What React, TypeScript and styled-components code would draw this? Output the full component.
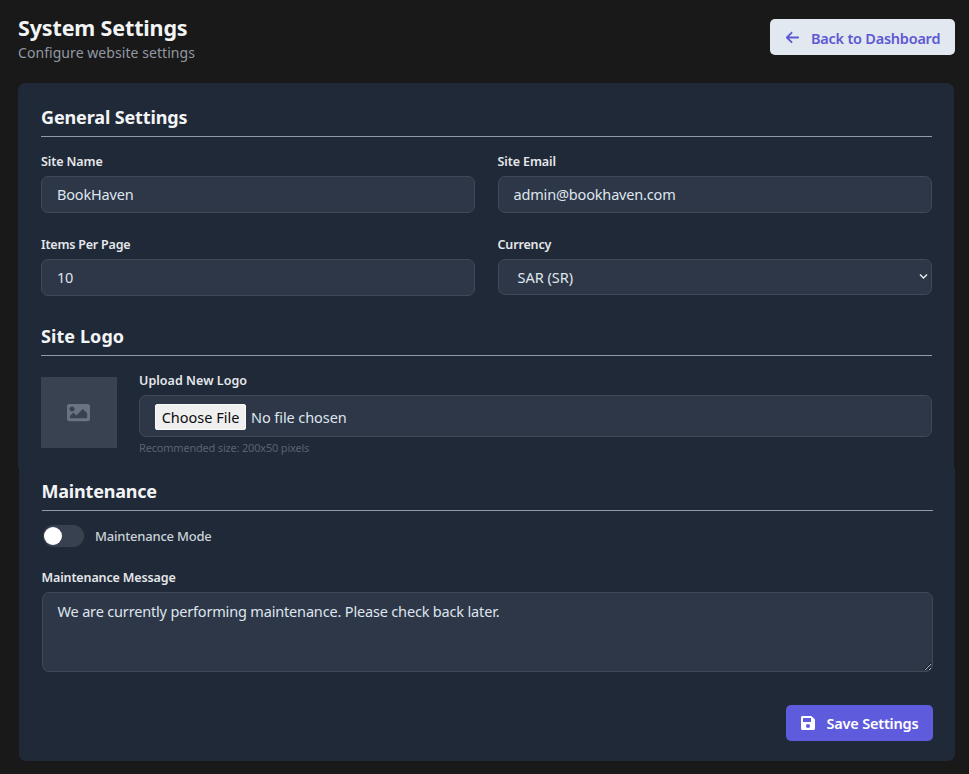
import React from "react";
import styled, { createGlobalStyle, css } from "styled-components";
import { FaImage, FaSave } from "react-icons/fa";
import { FaArrowLeft } from "react-icons/fa6";

const GlobalStyle = createGlobalStyle`
  *, *::before, *::after { box-sizing: border-box; }
  html, body { margin: 0; background: #191919; }
  body, input, textarea, select, button {
    font-family: "Noto Sans", "Open Sans", sans-serif;
  }
`;

const Page = styled.div`
  width: 969px;
  height: 774px;
  padding: 13px 14px 0 18px;
  background: #191919;
  overflow: hidden;
`;

const Header = styled.header`
  display: flex;
  justify-content: space-between;
  align-items: flex-start;
  height: 70px;
`;

const Title = styled.h1`
  margin: 0;
  font-size: 21.5px;
  line-height: 30px;
  font-weight: 700;
  letter-spacing: -0.15px;
  color: #f3f4f6;
`;

const Subtitle = styled.p`
  margin: 0;
  font-size: 14px;
  line-height: 19px;
  letter-spacing: 0.06px;
  color: #9298a2;
`;

const Button = styled.button<{ $primary?: boolean }>`
  display: flex;
  align-items: center;
  height: 36px;
  border: 0;
  border-radius: 5px;
  font-size: 14.5px;
  font-weight: 600;
  line-height: 20px;
  white-space: nowrap;
  ${({ $primary }) =>
    $primary
      ? css`
          width: 147px;
          padding: 0 0 0 14px;
          gap: 11px;
          letter-spacing: -0.2px;
          color: #ffffff;
          background: #5f5bdd;
        `
      : css`
          width: 185px;
          margin-top: 6px;
          padding: 1px 0 0 15px;
          gap: 11px;
          letter-spacing: -0.24px;
          color: #5d58d4;
          background: #e2e8f0;
        `}
`;

const Panel = styled.section<{ $lower?: boolean }>`
  width: 936px;
  background: #202937;
  ${({ $lower }) =>
    $lower
      ? css`
          height: 293px;
          margin-left: 1px;
          padding: 10px 22px 0 22.5px;
          border-radius: 0 0 7px 7px;
        `
      : css`
          height: 385px;
          padding: 21px 22px 0 23px;
          border-radius: 7px 7px 0 0;
        `}
`;

const SectionTitle = styled.h2<{ $spacing: number }>`
  height: 33px;
  margin: 0 0 13px;
  font-size: 18px;
  line-height: 27px;
  font-weight: 700;
  letter-spacing: ${({ $spacing }) => $spacing}px;
  color: #f3f4f6;
  border-bottom: 1px solid #929aa5;
`;

const FieldGrid = styled.div`
  display: grid;
  grid-template-columns: 434px 434.5px;
  column-gap: 22.5px;
  row-gap: 20px;
  height: 173px;
  grid-auto-rows: 63px;
`;

const Label = styled.label<{ $spacing?: number }>`
  display: block;
  height: 26px;
  font-size: 12.5px;
  line-height: 23px;
  font-weight: 600;
  letter-spacing: ${({ $spacing }) => $spacing ?? -0.1}px;
  color: #e5e7eb;
`;

const fieldSkin = css`
  border: 1px solid #3f4957;
  border-radius: 7px;
  background: #2e3747;
  color: #dfe5ee;
  font-size: 14.5px;
  letter-spacing: -0.17px;
`;

const Input = styled.input`
  ${fieldSkin}
  display: block;
  width: 100%;
  height: 37px;
  padding: 0 15px 1px;
  outline: none;
`;

const SelectBox = styled.div`
  ${fieldSkin}
  display: flex;
  align-items: center;
  justify-content: space-between;
  height: 36px;
  padding: 0 3px 1px 19px;
  letter-spacing: 0;
`;

const LogoRow = styled.div`
  display: flex;
  gap: 22.5px;
`;

const LogoPreview = styled.div`
  display: flex;
  align-items: center;
  justify-content: center;
  width: 75.5px;
  height: 71px;
  margin-top: 8px;
  background: #394250;
  color: #6b7280;
`;

const Upload = styled.div`
  flex: 1;
`;

const FileBox = styled.div`
  ${fieldSkin}
  display: flex;
  align-items: center;
  gap: 5px;
  height: 42px;
  padding: 1px 15px 0;
  letter-spacing: -0.08px;
`;

const ChooseButton = styled.button`
  width: 91px;
  height: 26px;
  padding: 0;
  border: 1px solid #fafafa;
  border-radius: 2px;
  background: #efefef;
  color: #0c0c0c;
  font-size: 14.5px;
  line-height: 24px;
  white-space: nowrap;
`;

const Hint = styled.p`
  margin: 3px 0 0;
  font-size: 11px;
  line-height: 16px;
  letter-spacing: -0.19px;
  color: #596270;
`;

const ToggleRow = styled.div`
  display: flex;
  align-items: center;
  gap: 11.5px;
  height: 24px;
  margin: 0 0 18px 1px;
  font-size: 13px;
  font-weight: 500;
  letter-spacing: -0.2px;
  color: #cbd1d9;
`;

const Track = styled.span`
  display: flex;
  align-items: center;
  width: 41px;
  height: 22px;
  padding: 0 1px;
  border-radius: 11px;
  background: #38414f;
`;

const Knob = styled.span`
  width: 18px;
  height: 18px;
  border-radius: 50%;
  background: #ffffff;
`;

const TextArea = styled.textarea`
  ${fieldSkin}
  display: block;
  width: 891px;
  height: 80px;
  padding: 8px 15px;
  line-height: 21px;
  outline: none;
  resize: vertical;
`;

const Actions = styled.div`
  display: flex;
  justify-content: flex-end;
  width: 891px;
  margin-top: 33px;
`;

export default function App() {
  return (
    <Page>
      <GlobalStyle />
      <Header>
        <div>
          <Title>System Settings</Title>
          <Subtitle>Configure website settings</Subtitle>
        </div>
        <Button>
          <FaArrowLeft size={15} />
          Back to Dashboard
        </Button>
      </Header>
      <Panel>
        <SectionTitle $spacing={-0.13}>General Settings</SectionTitle>
        <FieldGrid>
          <div>
            <Label>Site Name</Label>
            <Input defaultValue="BookHaven" />
          </div>
          <div>
            <Label>Site Email</Label>
            <Input defaultValue="admin@bookhaven.com" />
          </div>
          <div>
            <Label $spacing={-0.2}>Items Per Page</Label>
            <Input defaultValue="10" />
          </div>
          <div>
            <Label $spacing={-0.15}>Currency</Label>
            <SelectBox>
              SAR (SR)
              <svg width="9" height="7" viewBox="0 0 9 7" fill="none">
                <path d="M1 1.5L4.5 5L8 1.5" stroke="#e5e7eb" strokeWidth="1.5" />
              </svg>
            </SelectBox>
          </div>
        </FieldGrid>
        <SectionTitle $spacing={0.08}>Site Logo</SectionTitle>
        <LogoRow>
          <LogoPreview>
            <FaImage size={23} />
          </LogoPreview>
          <Upload>
            <Label $spacing={0.04}>Upload New Logo</Label>
            <FileBox>
              <ChooseButton>Choose File</ChooseButton>
              <span>No file chosen</span>
            </FileBox>
            <Hint>Recommended size: 200x50 pixels</Hint>
          </Upload>
        </LogoRow>
      </Panel>
      <Panel $lower>
        <SectionTitle $spacing={-0.2}>Maintenance</SectionTitle>
        <ToggleRow>
          <Track>
            <Knob />
          </Track>
          Maintenance Mode
        </ToggleRow>
        <Label $spacing={-0.13}>Maintenance Message</Label>
        <TextArea defaultValue="We are currently performing maintenance. Please check back later." />
        <Actions>
          <Button $primary>
            <FaSave size={16} />
            Save Settings
          </Button>
        </Actions>
      </Panel>
    </Page>
  );
}
